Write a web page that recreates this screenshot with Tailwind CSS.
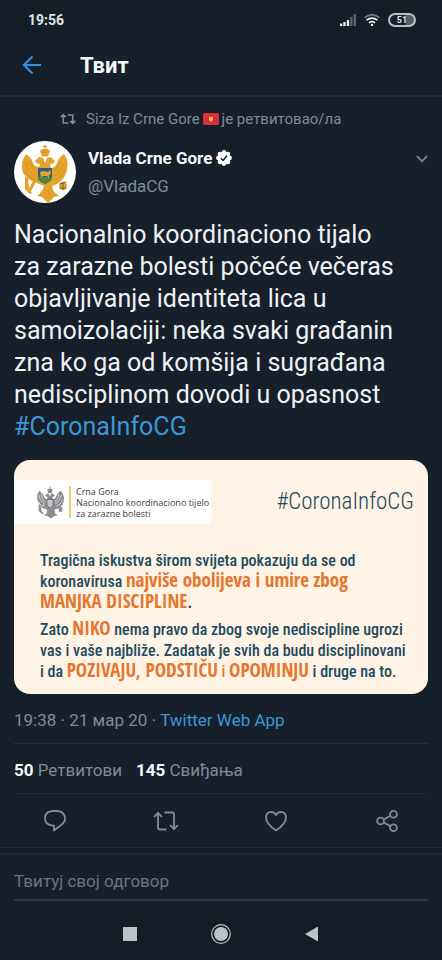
<!DOCTYPE html>
<html lang="sr">
<head>
<meta charset="utf-8">
<meta name="viewport" content="width=device-width, initial-scale=1">
<title>Твит</title>
<script src="https://cdn.jsdelivr.net/npm/@tailwindcss/browser@4"></script>
</head>
<body class="flex min-h-screen flex-col bg-[#17202a] font-[Roboto,'Noto_Sans',sans-serif] text-[#7f8b97]">

<!-- Device status bar -->
<div class="flex h-10 shrink-0 items-center justify-between bg-[#151e27] pl-7 pr-[26px] text-[#dfe5ea]">
  <time class="text-[14px] font-bold leading-5">19:56</time>
  <div class="flex items-center gap-2">
    <svg class="h-3 w-4" viewBox="0 0 16 12" aria-hidden="true">
      <path fill="#eef2f5" d="M0 9.600h2.300V12H0zM3.300 8h2.300v4H3.300zM6.800 6h2.300v6H6.800z"/>
      <path fill="#5c656e" d="M10.200 3h2.300v9h-2.300zM13.600 0h2.400v12h-2.400z"/>
    </svg>
    <svg class="h-3 w-4" viewBox="0 0 16 12" fill="none" stroke-width="1.700" aria-hidden="true">
      <path stroke="#717a83" d="M.6 3.600Q8-2 15.400 3.600"/>
      <path stroke="#eef2f5" d="M2.600 6.200q5.400-4.200 10.800 0M5 8.800q3-2.300 6 0"/>
      <circle cx="8" cy="11" r="1.200" fill="#eef2f5"/>
    </svg>
    <div class="flex h-[14px] w-7 items-center justify-center rounded-full border-2 border-[#b9c0c6] bg-linear-to-r from-[#17202a] from-65% to-[#59616a] to-65% text-[9px] font-bold leading-[10px]">51</div>
  </div>
</div>

<!-- App bar -->
<header class="flex h-[57px] shrink-0 items-center gap-9 border-b-2 border-[#202a34] px-5 pb-1">
  <button class="flex size-6 items-center justify-center" aria-label="Назад">
    <svg class="size-6" viewBox="0 0 24 24" fill="none" stroke="#2f93dc" stroke-width="2.200" aria-hidden="true"><path d="M21 11H4.300M12.500 2.500L4 11l8.500 8.500"/></svg>
  </button>
  <h1 class="text-[22px] font-bold leading-7 text-[#f4f7f9]">Твит</h1>
</header>

<main class="flex flex-col">
  <article class="flex flex-col px-[14px]">
    <div class="flex h-11 items-center gap-2 pl-[46px] text-[15px] leading-5">
      <svg class="mr-[2px] h-3 w-4" viewBox="0 0 22 16" fill="none" stroke="#7f8b97" stroke-width="2.200" aria-hidden="true">
        <path d="M1 5.500L4.500 2 8 5.500M4.500 2v11.500h7M10.500 2.500h7V14M14 10.500l3.500 3.500 3.500-3.500"/>
      </svg>
      <p class="flex items-center gap-[3px]">Siza Iz Crne Gore
        <svg class="h-3 w-4" viewBox="0 0 16 12" role="img" aria-label="Црна Гора">
          <rect width="16" height="12" rx="1.500" fill="#d9303e"/>
          <path fill="#f0b450" d="M6 3.500l1 .8 1-1 1 1 1-.8v3.500L8 8.700 6 7z"/>
        </svg>
        је ретвитовао/ла</p>
    </div>

    <div class="flex items-start">
      <svg class="size-[62px] shrink-0" viewBox="0 0 62 62" role="img" aria-label="Vlada Crne Gore">
        <circle cx="31" cy="31" r="31" fill="#fff"/>
        <g fill="#e5a32c">
          <path d="M26 9.500q5-4 10 0l-2 6h-6zM30.200 4h1.600v3h-1.600zM29 5h4v1h-4z"/>
          <path d="M12 13q5 3 7 9 2 4 6 4l1-3q-4 0-5-3l4-4 4 1 2 5 2-5 4-1 4 4q-1 3-5 3l1 4q4 0 6-5 2-6 7-9 5 7 3 16-2 9-10 14l-5 2 2 6 5 4-5 1-6 6-6-6-5-1 5-4 2-6-5-2Q10 38 8 29 7 20 12 13z"/>
          <path d="M11 36l3 1 1 10 3 5-2 1-5-5zM19 40l3 1-6 11-3-1z"/>
          <circle cx="49" cy="45" r="4"/>
        </g>
        <path d="M12 22q2 9 9 13M16 20q2 8 7 10M50 22q-2 9-9 13M46 20q-2 8-7 10M11 29q3 8 10 10M51 29q-3 8-10 10M28 49l-2 5M34 49l2 5M27 11h8" fill="none" stroke="#cf8a20" stroke-width=".7"/>
        <path d="M24 27h14v10q0 3-7 6-7-3-7-6z" fill="#2c5f86"/>
        <path d="M24 36h14q0 4-7 7-7-3-7-7z" fill="#4f8a3c"/>
        <path d="M26 31l3-1 5 1 2-2 1 4-2 1v3l-2-2h-4l-2 2z" fill="#e5a32c"/>
        <path d="M46 43l6-2M46 47h6M49 41v8" stroke="#7a5a22"/>
      </svg>
      <div class="ml-3 flex-1 pt-[5px]">
        <div class="flex h-6 items-center gap-1">
          <h2 class="text-[17px] font-bold leading-6 text-[#f4f7f9]">Vlada Crne Gore</h2>
          <svg class="size-4" viewBox="0 0 16 16" role="img" aria-label="Верификован налог">
            <g fill="#fff"><circle cx="8" cy="8" r="5.800"/><circle cx="8" cy="2.500" r="2.400"/><circle cx="8" cy="13.500" r="2.400"/><circle cx="2.500" cy="8" r="2.400"/><circle cx="13.500" cy="8" r="2.400"/><circle cx="4.100" cy="4.100" r="2.400"/><circle cx="11.900" cy="4.100" r="2.400"/><circle cx="4.100" cy="11.900" r="2.400"/><circle cx="11.900" cy="11.900" r="2.400"/></g>
            <path d="M4.800 8.300l2.300 2.200 3.900-5" fill="none" stroke="#17202a" stroke-width="1.500"/>
          </svg>
        </div>
        <p class="pt-1 text-[17px] leading-6">@VladaCG</p>
      </div>
      <button class="mt-2 flex h-5 w-3 items-center justify-center" aria-label="Још опција">
        <svg class="h-2 w-3" viewBox="0 0 12 8" fill="none" stroke="#6c7883" stroke-width="2" aria-hidden="true"><path d="M.8 1L6 6.300 11.200 1"/></svg>
      </button>
    </div>

    <p class="pt-4 text-[25px] leading-8 text-[#eef2f5]">Nacionalnio koordinaciono tijalo<br>za zarazne bolesti počeće večeras<br>objavljivanje identiteta lica u<br>samoizolaciji: neka svaki građanin<br>zna ko ga od komšija i sugrađana<br>nedisciplinom dovodi u opasnost<br><a href="#" class="text-[#3a97d8]">#CoronaInfoCG</a></p>

    <!-- Attached announcement card -->
    <section class="mt-[17px] rounded-2xl bg-[#fef3e4] pb-3 pt-5 text-[#1d4a60]">
      <div class="flex items-start justify-between pr-[14px]">
        <div class="flex h-11 items-center gap-[5px] bg-white pl-[22px] pr-[2px]">
          <svg class="h-8 w-7" viewBox="0 0 32 36" role="img" aria-label="Grb Crne Gore">
            <g fill="#8b8d90">
              <path d="M13 4q3-3 6 0l-1 4h-4zM15.500 0h1v3h-1z"/>
              <path d="M4 5q4 3 5 7 2 3 4 3v-3l-3-1 3-3 2 1 1 3 1-3 2-1 3 3-3 1v3q2 0 4-3 1-4 5-7 6 6 3 14-2 6-8 7l-2 1 1 4 3 2-4 1-4 3-4-3-4-1 3-2 1-4-2-1q-6-1-8-7Q-1 11 4 5z"/>
              <path d="M3 21l3 1v6l3 3-2 1-4-4zM26 24h4v5h-4z"/>
            </g>
            <path d="M3 10q2 8 7 10M6 9q1 7 5 9M29 10q-2 8-7 10M26 9q-1 7-5 9M5 24l5-3M1 15q3 7 8 8M31 15q-3 7-8 8" fill="none" stroke="#dcdddf"/>
            <path d="M12.500 15h7v6q0 2-3.500 4-3.500-2-3.500-4z" fill="#c6c8ca" stroke="#55585c" stroke-width=".8"/>
          </svg>
          <div class="h-8 w-[2px] bg-[#e3d36c]"></div>
          <p class="text-[9px] leading-[11px] text-[#3d4043] font-['Open_Sans','Noto_Sans',sans-serif]">Crna Gora<br>Nacionalno koordinaciono tijelo<br>za zarazne bolesti</p>
        </div>
        <p class="mt-2 text-[23px] font-light leading-7 font-['Roboto_Condensed','Liberation_Sans_Narrow',sans-serif]">#CoronaInfoCG</p>
      </div>
      <div class="flex flex-col gap-[6px] whitespace-nowrap pl-[26px] pt-[26px] text-[16px] font-medium leading-[21px] font-['Roboto_Condensed','Liberation_Sans_Narrow',sans-serif]">
        <p>Tragična iskustva širom svijeta pokazuju da se od<br>koronavirusa <b class="text-[19px] leading-none text-[#e5762d] font-['Open_Sans_Condensed','Roboto_Condensed',sans-serif]">najviše obolijeva i umire zbog</b><br><b class="text-[19px] leading-none text-[#e5762d] font-['Open_Sans_Condensed','Roboto_Condensed',sans-serif]">MANJKA DISCIPLINE</b><b>.</b></p>
        <p>Zato <b class="text-[19px] leading-none text-[#e5762d] font-['Open_Sans_Condensed','Roboto_Condensed',sans-serif]">NIKO</b> nema pravo da zbog svoje nediscipline ugrozi<br>vas i vaše najbliže. Zadatak je svih da budu disciplinovani<br>i da <b class="text-[19px] leading-none text-[#e5762d] font-['Open_Sans_Condensed','Roboto_Condensed',sans-serif]">POZIVAJU, PODSTIČU</b> <span class="text-[#e5762d]">i</span> <b class="text-[19px] leading-none text-[#e5762d] font-['Open_Sans_Condensed','Roboto_Condensed',sans-serif]">OPOMINJU</b> i druge na to.</p>
      </div>
    </section>

    <p class="h-[50px] border-b border-[#26313b] pt-[14px] text-[17px] leading-6"><time>19:38 · 21 мар 20</time> · <a href="#" class="text-[#3a97d8]">Twitter Web App</a></p>
    <p class="flex h-[50px] items-center gap-[14px] border-b border-[#202a34] pt-[2px] text-[17px] leading-6"><a href="#"><b class="text-[#f4f7f9]">50</b> Ретвитови</a><a href="#"><b class="text-[#f4f7f9]">145</b> Свиђања</a></p>
  </article>

  <div class="flex h-[54px] items-center justify-around border-b border-[#202a34]">
    <button class="flex size-6 items-center justify-center" aria-label="Одговори">
      <svg class="size-[22px]" viewBox="0 0 22 22" fill="none" stroke="#7f8b97" stroke-width="1.800" stroke-linejoin="round" aria-hidden="true"><path d="M9 1h4q8 .5 8 7.500 0 4-4.500 7L10 20.500v-4.800H9Q1 15 1 8.300 1 1.500 9 1z"/></svg>
    </button>
    <button class="flex size-6 items-center justify-center" aria-label="Ретвитуј">
      <svg class="h-5 w-[26px] shrink-0" viewBox="0 0 26 20" fill="none" stroke="#7f8b97" stroke-width="1.800" aria-hidden="true"><path d="M1 6l4-4.200L9 6M5 2v14.500q0 2 2 2h6.500M11.500 1.500H19q2 0 2 2V18M17 14l4 4.200 4-4.200"/></svg>
    </button>
    <button class="flex size-6 items-center justify-center" aria-label="Свиђа ми се">
      <svg class="size-[22px]" viewBox="0 0 22 22" fill="none" stroke="#7f8b97" stroke-width="1.800" stroke-linejoin="round" aria-hidden="true"><path d="M11 20.500Q1 14 1 7.300 1.300 2 6 1.800q3.500 0 5 3.400 1.500-3.400 5-3.400 4.700.2 5 5.500 0 6.700-10 13.200z"/></svg>
    </button>
    <button class="flex size-6 items-center justify-center" aria-label="Подели">
      <svg class="size-[22px]" viewBox="0 0 22 22" fill="none" stroke="#7f8b97" stroke-width="1.800" aria-hidden="true"><circle cx="4.500" cy="11" r="3.400"/><circle cx="17.500" cy="4.300" r="3.400"/><circle cx="17.500" cy="17.700" r="3.400"/><path d="M7.600 9.500l6.800-3.600M7.600 12.500l6.800 3.600"/></svg>
    </button>
  </div>
</main>

<!-- Reply box -->
<form class="mt-[5px] border-t-2 border-[#202a34] px-[14px] pt-1">
  <label for="reply" class="sr-only">Твитуј свој одговор</label>
  <input id="reply" type="text" placeholder="Твитуј свој одговор" class="block h-[42px] w-full border-b-2 border-[#2c3741] bg-transparent pt-1 text-[17px] leading-6 outline-none placeholder:text-[#697580]">
</form>

<!-- Device navigation bar -->
<nav class="mt-1 flex flex-1 items-center justify-center gap-[71px] bg-[#131c25] pt-[2px]">
  <button aria-label="Скорашње"><svg class="size-5" viewBox="0 0 20 20" aria-hidden="true"><path fill="#bcc1c6" d="M3 3h14v14H3z"/></svg></button>
  <button aria-label="Почетак"><svg class="size-5" viewBox="0 0 20 20" aria-hidden="true"><circle cx="10" cy="10" r="9.300" fill="none" stroke="#bcc1c6" stroke-width="1.200"/><circle cx="10" cy="10" r="7" fill="#bcc1c6"/></svg></button>
  <button aria-label="Назад"><svg class="size-5" viewBox="0 0 20 20" aria-hidden="true"><path fill="#bcc1c6" d="M16 2.500v15L3 10z"/></svg></button>
</nav>
</body>
</html>
